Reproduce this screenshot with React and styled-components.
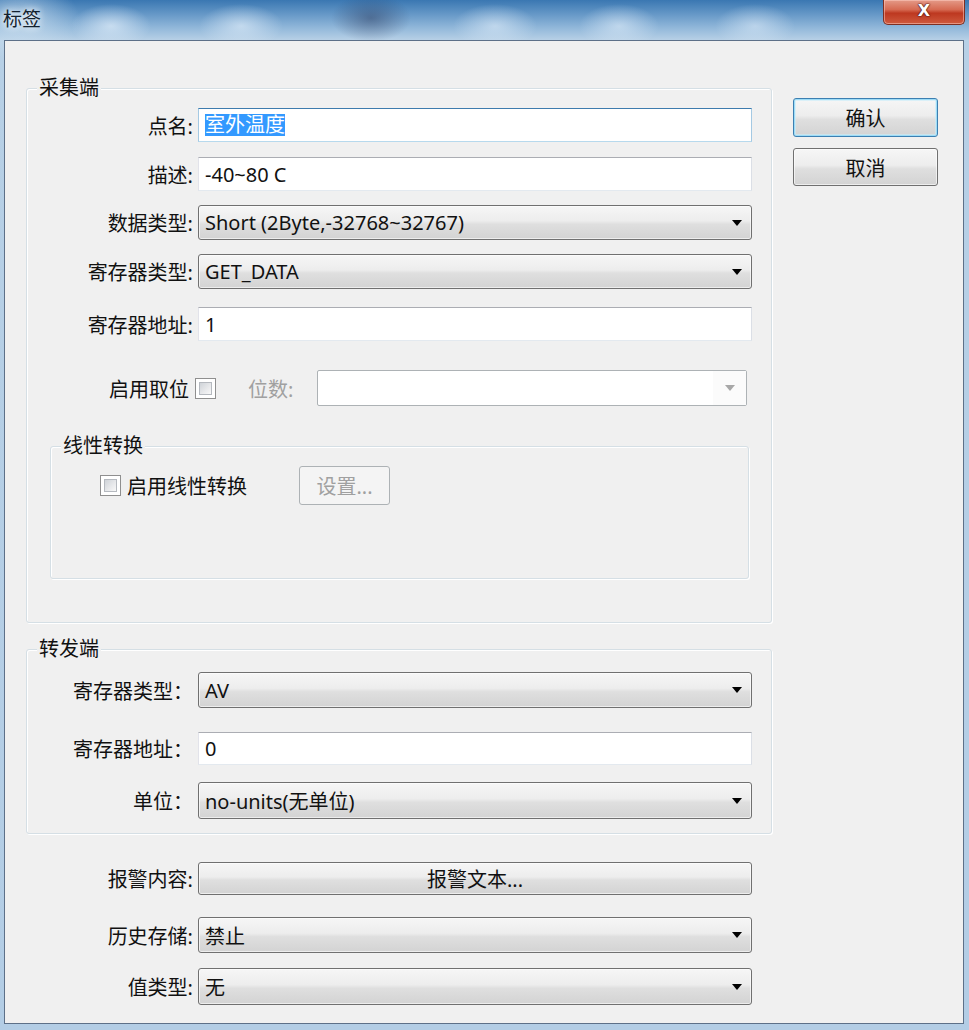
import React from "react";
import styled, { createGlobalStyle } from "styled-components";

const GlobalStyle = createGlobalStyle`
    html, body {
        margin: 0;
        padding: 0;
        background: #c8dbeb;
    }
    body {
        font-family: "Noto Sans", "Noto Sans CJK SC", sans-serif;
    }
`;

const Window = styled.div`
    width: 969px;
    height: 1030px;
    display: flex;
    flex-direction: column;
    box-sizing: border-box;
    background:
        radial-gradient(ellipse 40px 22px at 111px 26px, rgba(225, 238, 250, 0.7), transparent),
        radial-gradient(ellipse 42px 22px at 241px 26px, rgba(225, 238, 250, 0.65), transparent),
        radial-gradient(ellipse 40px 24px at 371px 18px, rgba(45, 60, 95, 0.5), transparent),
        radial-gradient(ellipse 42px 22px at 495px 26px, rgba(225, 238, 250, 0.6), transparent),
        radial-gradient(ellipse 40px 22px at 619px 26px, rgba(225, 238, 250, 0.6), transparent),
        radial-gradient(ellipse 40px 22px at 755px 26px, rgba(225, 238, 250, 0.55), transparent),
        radial-gradient(ellipse 60px 40px at 20px 20px, rgba(210, 228, 242, 0.7), transparent),
        linear-gradient(to bottom, #3a77b2 0px, #5f93c4 12px, #92b8da 28px, #b7d0e6 40px, #b3cde5 100%);
`;

const TitleBar = styled.div`
    height: 40px;
    display: flex;
    justify-content: space-between;
    align-items: flex-start;
    padding: 0 4px 0 3px;
`;

const Title = styled.div`
    margin-top: 6px;
    font-family: "Noto Sans CJK SC", sans-serif;
    font-size: 19px;
    line-height: 24px;
    color: #14222e;
    text-shadow: 0 0 6px rgba(255, 255, 255, 0.9), 0 0 10px rgba(255, 255, 255, 0.7);
`;

const CloseButton = styled.div`
    width: 82px;
    height: 25px;
    box-sizing: border-box;
    display: flex;
    align-items: center;
    justify-content: center;
    border: 1px solid #7e2f22;
    border-top: none;
    border-radius: 0 0 5px 5px;
    background: linear-gradient(to bottom, #e49a88 0%, #d66a52 40%, #bd3820 55%, #cf5a3e 100%);
    box-shadow: inset 0 0 0 1px rgba(255, 210, 200, 0.5);
    color: #fff;
    font-family: "DejaVu Sans", sans-serif;
    font-weight: bold;
    font-size: 16px;
    line-height: 1;
    padding-bottom: 2px;
    text-shadow: 0 0 2px #4a140c, 0 0 1px #4a140c, 0 0 1px #4a140c;
`;

const Client = styled.div`
    flex: 1;
    margin: 0 5px 6px 4px;
    border: 1px solid #5d7088;
    background: #f0f0f0;
    display: flex;
    gap: 21px;
    padding: 36px 24px 0 21px;
    color: #111;
`;

const MainColumn = styled.div`
    width: 746px;
    display: flex;
    flex-direction: column;
`;

const SideColumn = styled.div`
    width: 145px;
    display: flex;
    flex-direction: column;
    gap: 11px;
    padding-top: 21px;
`;

const Group = styled.fieldset`
    margin: ${(p) => p.$margin || "0"};
    padding: ${(p) => p.$padding};
    border: 1px solid #d5dfe5;
    border-radius: 3px;
    box-shadow: inset 1px 1px 0 #fff, 1px 1px 0 #fff;
    min-width: 0;
`;

const Legend = styled.legend`
    margin-left: 10px;
    padding: 0 2px;
    font-size: 20px;
    line-height: 22px;
    background: #f0f0f0;
`;

const FieldRow = styled.div`
    display: grid;
    grid-template-columns: 166px 554px;
    column-gap: 5px;
    align-items: center;
    margin-top: ${(p) => p.$mt || 0}px;
`;

const Label = styled.span`
    text-align: right;
    font-size: 20px;
    white-space: nowrap;
    padding-right: ${(p) => p.$pr || 0}px;
`;

const TextBox = styled.div`
    height: ${(p) => p.$h || 34}px;
    box-sizing: border-box;
    display: flex;
    align-items: center;
    padding-left: 6px;
    background: #fff;
    border: 1px solid #e2e3ea;
    border-top-color: ${(p) => (p.$focused ? "#3d7bad" : "#abadb3")};
    border-left-color: ${(p) => (p.$focused ? "#a4c9e3" : "#e2e3ea")};
    border-right-color: ${(p) => (p.$focused ? "#a4c9e3" : "#dbdfe6")};
    border-bottom-color: ${(p) => (p.$focused ? "#b7d9ed" : "#e3e9ef")};
    font-size: 20px;
    white-space: nowrap;
`;

const Selection = styled.span`
    background: #3399ff;
    color: #fff;
    line-height: 22px;
`;

const DropDown = styled.div`
    height: ${(p) => p.$h || 35}px;
    box-sizing: border-box;
    display: flex;
    align-items: center;
    justify-content: space-between;
    padding: 0 9px 0 6px;
    border: 1px solid #707070;
    border-radius: 3px;
    background: linear-gradient(to bottom, #f6f6f6 0%, #ededed 45%, #dfdfdf 55%, #d3d3d3 100%);
    box-shadow: inset 0 0 0 1px rgba(255, 255, 255, 0.6);
    font-size: 20px;
    white-space: nowrap;
`;

const Arrow = styled.span`
    width: 0;
    height: 0;
    border-left: 5px solid transparent;
    border-right: 5px solid transparent;
    border-top: 6px solid ${(p) => (p.$disabled ? "#a8a8a8" : "#000")};
`;

const DisabledCombo = styled.div`
    flex: 1;
    height: 36px;
    box-sizing: border-box;
    display: flex;
    align-items: center;
    justify-content: flex-end;
    margin: 0 5px 0 24px;
    border: 1px solid #adb2b5;
    border-radius: 2px;
    background: #fff;
`;

const ComboButton = styled.div`
    width: 33px;
    height: 100%;
    display: flex;
    align-items: center;
    justify-content: center;
    background: #fbfbfb;
`;

const CheckBox = styled.span`
    width: 21px;
    height: 21px;
    box-sizing: border-box;
    flex: none;
    border: 1px solid #8f8f8f;
    background: #fff;
    padding: 3px;
    margin-left: ${(p) => p.$ml || 0}px;
    &::after {
        content: "";
        display: block;
        width: 100%;
        height: 100%;
        box-sizing: border-box;
        border: 1px solid #b5b9bf;
        background: linear-gradient(135deg, #cfd3d8 0%, #e9eaec 60%, #f8f8f8 100%);
    }
`;

const InlineRow = styled.div`
    display: flex;
    align-items: center;
    padding-left: ${(p) => p.$pl || 0}px;
`;

const DimText = styled.span`
    color: #a0a0a0;
    font-size: 20px;
    margin-left: ${(p) => p.$ml || 0}px;
`;

const CheckText = styled.span`
    font-size: 20px;
    margin-left: 6px;
`;

const PushButton = styled.div`
    height: ${(p) => p.$h || 38}px;
    box-sizing: border-box;
    display: flex;
    align-items: center;
    justify-content: center;
    border: 1px solid ${(p) => (p.$default ? "#3c7fb1" : "#707070")};
    border-radius: 3px;
    background: linear-gradient(to bottom, #f6f6f6 0%, #ededed 45%, #dfdfdf 55%, #d3d3d3 100%);
    box-shadow: ${(p) =>
        p.$default
            ? "inset 0 0 0 1px #9ddcf7, inset 0 0 0 2px rgba(200, 236, 250, 0.6)"
            : "inset 0 0 0 1px rgba(255, 255, 255, 0.6)"};
    font-size: 20px;
    white-space: nowrap;
`;

const DisabledButton = styled.div`
    width: 91px;
    height: 39px;
    box-sizing: border-box;
    display: flex;
    align-items: center;
    justify-content: center;
    margin-left: 52px;
    border: 1px solid #adb2b5;
    border-radius: 3px;
    background: #f4f4f4;
    color: #a0a0a0;
    font-size: 20px;
`;

const BottomSection = styled.div`
    padding-left: 1px;
    display: flex;
    flex-direction: column;
`;

export default function App() {
    return (
        <>
            <GlobalStyle />
            <Window>
                <TitleBar>
                    <Title>标签</Title>
                    <CloseButton>X</CloseButton>
                </TitleBar>
                <Client>
                    <MainColumn>
                        <Group $padding="9px 19px 43px 0">
                            <Legend>采集端</Legend>
                            <FieldRow>
                                <Label>点名:</Label>
                                <TextBox $focused>
                                    <Selection>室外温度</Selection>
                                </TextBox>
                            </FieldRow>
                            <FieldRow $mt={15}>
                                <Label>描述:</Label>
                                <TextBox>-40~80 C</TextBox>
                            </FieldRow>
                            <FieldRow $mt={14}>
                                <Label>数据类型:</Label>
                                <DropDown>
                                    Short (2Byte,-32768~32767)
                                    <Arrow />
                                </DropDown>
                            </FieldRow>
                            <FieldRow $mt={14}>
                                <Label>寄存器类型:</Label>
                                <DropDown>
                                    GET_DATA
                                    <Arrow />
                                </DropDown>
                            </FieldRow>
                            <FieldRow $mt={18}>
                                <Label>寄存器地址:</Label>
                                <TextBox>1</TextBox>
                            </FieldRow>
                            <FieldRow $mt={29}>
                                <Label $pr={4}>启用取位</Label>
                                <InlineRow>
                                    <CheckBox $ml={-3} />
                                    <DimText $ml={32}>位数:</DimText>
                                    <DisabledCombo>
                                        <ComboButton>
                                            <Arrow $disabled />
                                        </ComboButton>
                                    </DisabledCombo>
                                </InlineRow>
                            </FieldRow>
                            <Group $margin="29px 3px 0 23px" $padding="9px 0 73px 0">
                                <Legend>线性转换</Legend>
                                <InlineRow $pl={49}>
                                    <CheckBox />
                                    <CheckText>启用线性转换</CheckText>
                                    <DisabledButton>设置...</DisabledButton>
                                </InlineRow>
                            </Group>
                        </Group>

                        <Group $margin="15px 0 0 0" $padding="12px 19px 14px 0">
                            <Legend>转发端</Legend>
                            <FieldRow>
                                <Label>寄存器类型：</Label>
                                <DropDown $h={36}>
                                    AV
                                    <Arrow />
                                </DropDown>
                            </FieldRow>
                            <FieldRow $mt={24}>
                                <Label>寄存器地址：</Label>
                                <TextBox $h={33}>0</TextBox>
                            </FieldRow>
                            <FieldRow $mt={17}>
                                <Label>单位：</Label>
                                <DropDown $h={37}>
                                    no-units(无单位)
                                    <Arrow />
                                </DropDown>
                            </FieldRow>
                        </Group>

                        <BottomSection>
                            <FieldRow $mt={28}>
                                <Label>报警内容:</Label>
                                <PushButton $h={33}>报警文本...</PushButton>
                            </FieldRow>
                            <FieldRow $mt={22}>
                                <Label>历史存储:</Label>
                                <DropDown $h={36}>
                                    禁止
                                    <Arrow />
                                </DropDown>
                            </FieldRow>
                            <FieldRow $mt={15}>
                                <Label>值类型:</Label>
                                <DropDown $h={37}>
                                    无
                                    <Arrow />
                                </DropDown>
                            </FieldRow>
                        </BottomSection>
                    </MainColumn>
                    <SideColumn>
                        <PushButton $default $h={39}>确认</PushButton>
                        <PushButton $h={38}>取消</PushButton>
                    </SideColumn>
                </Client>
            </Window>
        </>
    );
}
